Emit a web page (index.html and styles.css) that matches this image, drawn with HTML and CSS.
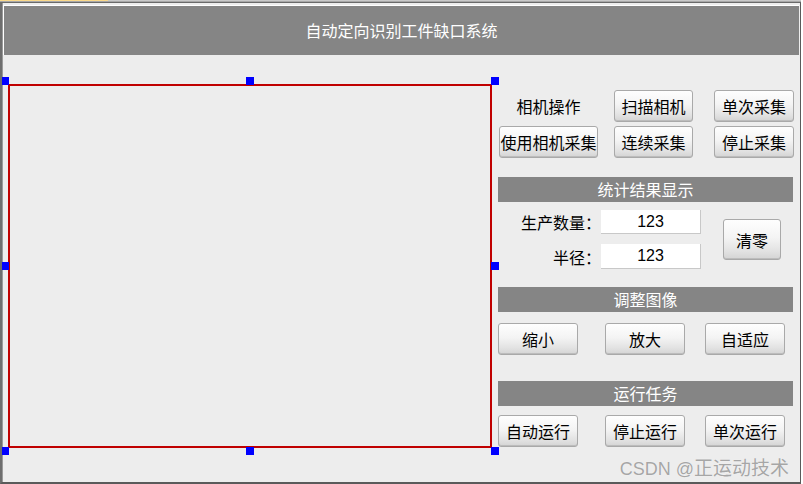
FILE: index.html
```html
<!DOCTYPE html>
<html lang="zh">
<head>
<meta charset="utf-8">
<title>自动定向识别工件缺口系统</title>
<link rel="stylesheet" href="styles.css">
</head>
<body>
<div class="topline"></div>
<div class="frame">
  <div class="titlebar">自动定向识别工件缺口系统</div>
  <div class="main">
    <div class="canvas-wrap">
      <div class="canvas"></div>
      <span class="handle h-tl"></span>
      <span class="handle h-tm"></span>
      <span class="handle h-tr"></span>
      <span class="handle h-ml"></span>
      <span class="handle h-mr"></span>
      <span class="handle h-bl"></span>
      <span class="handle h-bm"></span>
      <span class="handle h-br"></span>
    </div>
    <div class="panel">
      <div class="cam-grid">
        <div class="label cam-label">相机操作</div>
        <button class="btn">扫描相机</button>
        <button class="btn c3">单次采集</button>
        <button class="btn">使用相机采集</button>
        <button class="btn">连续采集</button>
        <button class="btn c3">停止采集</button>
      </div>
      <div class="section first">统计结果显示</div>
      <div class="stats">
        <div class="fields">
          <div class="field"><span class="flabel">生产数量：</span><span class="input">123</span></div>
          <div class="field f2"><span class="flabel">半径：</span><span class="input tall">123</span></div>
        </div>
        <button class="btn clear">清零</button>
      </div>
      <div class="section s2">调整图像</div>
      <div class="btnrow r1">
        <button class="btn wide">缩小</button>
        <button class="btn wide b2">放大</button>
        <button class="btn wide b3">自适应</button>
      </div>
      <div class="section s3">运行任务</div>
      <div class="btnrow r2">
        <button class="btn wide">自动运行</button>
        <button class="btn wide b2">停止运行</button>
        <button class="btn wide b3">单次运行</button>
      </div>
      <div class="watermark"><span class="wm-latin">CSDN @</span>正运动技术</div>
    </div>
  </div>
</div>
</body>
</html>
```
FILE: styles.css
```css
html, body {
  margin: 0;
  padding: 0;
  background: #ffffff;
}
body {
  width: 803px;
  height: 484px;
  overflow: hidden;
  font-family: "Noto Sans CJK SC", "Liberation Sans", sans-serif;
  font-size: 16px;
}
.topline {
  height: 1px;
  background: linear-gradient(to right, #fbd98a 0, #fbd98a 108px, #c9c9c9 108px, #c9c9c9 100%);
  border-bottom: 1px solid #a8a8a8;
  width: 801px;
}
.frame {
  width: 798px;
  height: 479px;
  background: #ededed;
  border-top: 1px solid #6a6a6a;
  border-left: 2px solid #6e6e6e;
  border-right: 1px solid #5a5a5a;
  border-bottom: 2px solid #5a5a5a;
  box-shadow: inset 1px 0 0 #9a9a9a;
  overflow: hidden;
}
.titlebar {
  margin: 2px 0 0 1px;
  width: 795px;
  height: 49px;
  background: #858585;
  border-top: 1px solid #ffffff;
  border-left: 1px solid #ffffff;
  color: #ffffff;
  text-align: center;
  line-height: 49px;
  font-size: 16px;
}
.main {
  display: flex;
  align-items: flex-start;
}
.canvas-wrap {
  position: relative;
  margin: 29px 0 0 6px;
}
.canvas {
  width: 480px;
  height: 360px;
  border: 2px solid #c00000;
  background: #ededed;
}
.handle {
  position: absolute;
  width: 7px;
  height: 8px;
  background: #0000ff;
}
.h-tl { left: -6px; top: -7px; }
.h-tm { left: 238px; top: -7px; width: 8px; }
.h-tr { left: 483px; top: -7px; width: 8px; }
.h-ml { left: -6px; top: 178px; }
.h-mr { left: 483px; top: 178px; width: 8px; }
.h-bl { left: -6px; top: 363px; }
.h-bm { left: 238px; top: 363px; width: 8px; }
.h-br { left: 483px; top: 363px; width: 8px; }
.panel {
  margin: 35px 0 0 6px;
  width: 295px;
}
.btn {
  font-family: "Noto Sans CJK SC", "Liberation Sans", sans-serif;
  font-size: 16px;
  color: #000;
  padding: 0;
  height: 32px;
  border: 1px solid #a9a9a9;
  border-radius: 3px;
  background: linear-gradient(to bottom, #fefefe 0%, #f4f4f4 45%, #e2e2e2 80%, #d4d4d4 100%);
  box-shadow: inset 0 -1px 0 #bcbcbc;
  line-height: 30px;
  white-space: nowrap;
}
.cam-grid {
  display: grid;
  grid-template-columns: 100px 79px 80px;
  grid-auto-rows: 32px;
  column-gap: 16px;
  row-gap: 4px;
}
.cam-grid .btn:nth-child(4) { margin-left: 1px; width: 99px; }
.cam-grid .c3 { margin-left: 5px; width: 80px; }
.label {
  line-height: 32px;
  text-align: center;
}
.cam-label { padding-left: 1px; }
.section {
  height: 25px;
  background: #858585;
  color: #fff;
  text-align: center;
  line-height: 24px;
  font-size: 16px;
}
.section.first { margin-top: 19px; }
.section.s2 { margin-top: 18px; }
.section.s3 { margin-top: 26px; }
.stats {
  display: flex;
  align-items: center;
  margin-top: 8px;
}
.fields {
  display: flex;
  flex-direction: column;
  gap: 10px;
}
.field {
  display: flex;
  align-items: center;
}
.flabel {
  width: 103px;
  text-align: right;
  line-height: 24px;
}
.input {
  width: 99px;
  height: 23px;
  background: #fff;
  border-right: 1px solid #c8c8c8;
  border-bottom: 1px solid #c8c8c8;
  text-align: center;
  font-family: "Liberation Sans", sans-serif;
  font-size: 16px;
  line-height: 24px;
}
.input.tall { height: 24px; }
.clear {
  width: 58px;
  height: 41px;
  margin-left: 22px;
}
.btnrow {
  display: flex;
}
.btnrow.r1 { margin-top: 11px; }
.btnrow.r2 { margin-top: 9px; }
.btn.wide { width: 80px; }
.btn.b2 { margin-left: 27px; }
.btn.b3 { margin-left: 20px; }
.watermark {
  margin-top: 7px;
  text-align: right;
  padding-right: 4px;
  font-family: "Noto Sans CJK SC", sans-serif;
  font-size: 19px;
  color: #a6a6a6;
  text-shadow: 0 0 1px #ffffff;
  line-height: 26px;
  white-space: nowrap;
}
.wm-latin {
  font-family: "Liberation Sans", sans-serif;
  font-size: 18px;
}
```
